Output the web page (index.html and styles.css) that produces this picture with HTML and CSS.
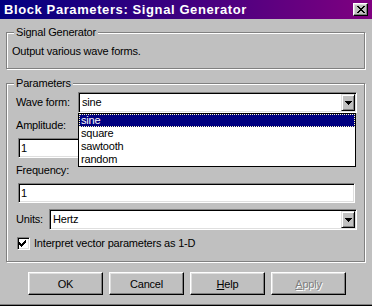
FILE: index.html
```html
<!DOCTYPE html>
<html>
<head>
<meta charset="utf-8">
<title>Block Parameters: Signal Generator</title>
<link rel="stylesheet" href="styles.css">
</head>
<body>
<div class="window">
  <div class="titlebar">
    <span class="title">Block Parameters: Signal Generator</span>
    <button class="close" type="button">
      <svg width="8" height="7" viewBox="0 0 8 7" shape-rendering="crispEdges"><path d="M0 0h2v1h-2z M6 0h2v1h-2z M1 1h2v1h-2z M5 1h2v1h-2z M2 2h4v1h-4z M3 3h2v1h-2z M2 4h4v1h-4z M1 5h2v1h-2z M5 5h2v1h-2z M0 6h2v1h-2z M6 6h2v1h-2z" fill="#000"/></svg>
    </button>
  </div>
  <div class="content">
    <fieldset class="group g1">
      <legend>Signal Generator</legend>
      <p class="desc">Output various wave forms.</p>
    </fieldset>
    <fieldset class="group g2">
      <legend>Parameters</legend>
      <div class="row">
        <span class="rlabel wf">Wave form:</span>
        <div class="combo">
          <span class="val">sine</span>
          <span class="arrowbtn"><svg width="7" height="4" viewBox="0 0 7 4" shape-rendering="crispEdges"><path d="M0 0h7v1h-7z M1 1h5v1h-5z M2 2h3v1h-3z M3 3h1v1h-1z" fill="#000"/></svg></span>
          <ul class="list">
            <li class="sel">sine</li>
            <li>square</li>
            <li>sawtooth</li>
            <li>random</li>
          </ul>
        </div>
      </div>
      <div class="field">
        <span class="flabel">Amplitude:</span>
        <div class="edit">1</div>
      </div>
      <div class="field">
        <span class="flabel">Frequency:</span>
        <div class="edit">1</div>
      </div>
      <div class="row units-row">
        <span class="rlabel un">Units:</span>
        <div class="combo">
          <span class="val">Hertz</span>
          <span class="arrowbtn"><svg width="7" height="4" viewBox="0 0 7 4" shape-rendering="crispEdges"><path d="M0 0h7v1h-7z M1 1h5v1h-5z M2 2h3v1h-3z M3 3h1v1h-1z" fill="#000"/></svg></span>
        </div>
      </div>
      <div class="check">
        <span class="cbox"><svg width="9" height="9" viewBox="0 0 9 9" shape-rendering="crispEdges"><path d="M6 1h1v1h-1z M5 2h2v1h-2z M0 3h1v1h-1z M4 3h3v1h-3z M0 4h2v1h-2z M3 4h3v1h-3z M0 5h5v1h-5z M1 6h3v1h-3z M2 7h1v1h-1z" fill="#000"/></svg></span>
        <span>Interpret vector parameters as 1-D</span>
      </div>
    </fieldset>
    <div class="buttons">
      <button class="btn" type="button">OK</button>
      <button class="btn" type="button">Cancel</button>
      <button class="btn" type="button"><u>H</u>elp</button>
      <button class="btn disabled" type="button"><u>A</u>pply</button>
    </div>
  </div>
</div>
</body>
</html>
```
FILE: styles.css
```css
* { box-sizing: border-box; }
html, body { margin: 0; padding: 0; }
body {
  width: 372px;
  height: 306px;
  overflow: hidden;
  background: #c0c0c0;
  font-family: "Liberation Sans", Arial, sans-serif;
  font-size: 11px;
  letter-spacing: -0.2px;
  color: #000;
}
.window {
  width: 372px;
  height: 306px;
  display: flex;
  flex-direction: column;
  background: #c0c0c0;
  border-bottom: 1px solid #000;
  box-shadow: inset 0 -1px 0 #808080;
}
.titlebar {
  flex: none;
  height: 19px;
  display: flex;
  align-items: center;
  justify-content: space-between;
  padding: 0 4px 0 4px;
  background: linear-gradient(to right, #000080, #800080);
}
.title {
  color: #fff;
  font-weight: bold;
  font-size: 13px;
  letter-spacing: 0.6px;
  line-height: 19px;
  white-space: nowrap;
}
.close {
  width: 15px;
  height: 13px;
  padding: 0;
  margin: 0;
  display: flex;
  align-items: center;
  justify-content: center;
  background: #c0c0c0;
  border: 1px solid;
  border-color: #fff #000 #000 #fff;
  box-shadow: inset -1px -1px 0 #808080, inset 1px 1px 0 #dfdfdf;
}
.content {
  flex: 1;
  display: flex;
  flex-direction: column;
  padding: 7px 7px 0 6px;
}
.group {
  margin: 0;
  min-width: 0;
  border: 1px solid #808080;
  box-shadow: inset 1px 1px 0 #fff, 1px 1px 0 #fff;
}
.group legend {
  padding: 0 2px;
  line-height: 13px;
  background: #c0c0c0;
}
.g1 { padding: 6px 7px 10px 5px; }
.g1 legend { margin-left: 2px; }
.desc { margin: 0; line-height: 13px; }
.g2 { margin-top: 8px; padding: 2px 7px 11px 9px; }
.g2 legend { margin-left: -2px; }
.row {
  display: flex;
  align-items: center;
}
.rlabel { flex: none; line-height: 13px; }
.rlabel.wf { width: 62px; }
.rlabel.un { width: 33px; }
.units-row { margin-top: 6px; }
.combo {
  position: relative;
  flex: 1;
  height: 21px;
  display: flex;
  align-items: center;
  padding: 1px 1px 1px 3px;
  background: #fff;
  border: 1px solid;
  border-color: #808080 #fff #fff #808080;
  box-shadow: inset 1px 1px 0 #000, inset -1px -1px 0 #dfdfdf;
}
.val { flex: 1; line-height: 13px; }
.arrowbtn {
  flex: none;
  width: 14px;
  height: 17px;
  display: flex;
  align-items: center;
  justify-content: center;
  background: #c0c0c0;
  border: 1px solid;
  border-color: #dfdfdf #000 #000 #dfdfdf;
  box-shadow: inset 1px 1px 0 #fff, inset -1px -1px 0 #808080;
}
.list {
  position: absolute;
  left: -1px;
  top: calc(100% + 1px);
  width: 278px;
  margin: 0;
  padding: 0;
  list-style: none;
  background: #fff;
  border: 1px solid #000;
  z-index: 2;
}
.list li {
  height: 13px;
  line-height: 13px;
  padding-left: 2px;
}
.list li.sel {
  background: #000080;
  color: #fff;
  outline: 1px dotted #ffffc0;
  outline-offset: -1px;
}
.field {
  display: flex;
  flex-direction: column;
  gap: 6px;
  margin-top: 6px;
}
.flabel { line-height: 13px; }
.edit {
  height: 20px;
  margin: 0 2px;
  padding-left: 2px;
  line-height: 18px;
  background: #fff;
  border: 1px solid;
  border-color: #808080 #fff #fff #808080;
  box-shadow: inset 1px 1px 0 #000, inset -1px -1px 0 #dfdfdf;
}
.check {
  display: flex;
  align-items: center;
  gap: 4px;
  height: 13px;
  margin: 7px 0 0 1px;
  line-height: 13px;
}
.cbox {
  flex: none;
  width: 13px;
  height: 13px;
  display: flex;
  align-items: center;
  justify-content: center;
  background: #fff;
  border: 1px solid;
  border-color: #808080 #fff #fff #808080;
  box-shadow: inset 1px 1px 0 #000, inset -1px -1px 0 #dfdfdf;
}
.buttons {
  display: flex;
  gap: 6px;
  margin: 10px 0 0 22px;
}
.btn {
  width: 75px;
  height: 23px;
  padding: 0;
  margin: 0;
  font: inherit;
  letter-spacing: inherit;
  color: #000;
  background: #c0c0c0;
  border: 1px solid;
  border-color: #fff #000 #000 #fff;
  box-shadow: inset -1px -1px 0 #808080, inset 1px 1px 0 #dfdfdf;
}
.btn.disabled {
  color: #808080;
  text-shadow: 1px 1px 0 #fff;
}
```
